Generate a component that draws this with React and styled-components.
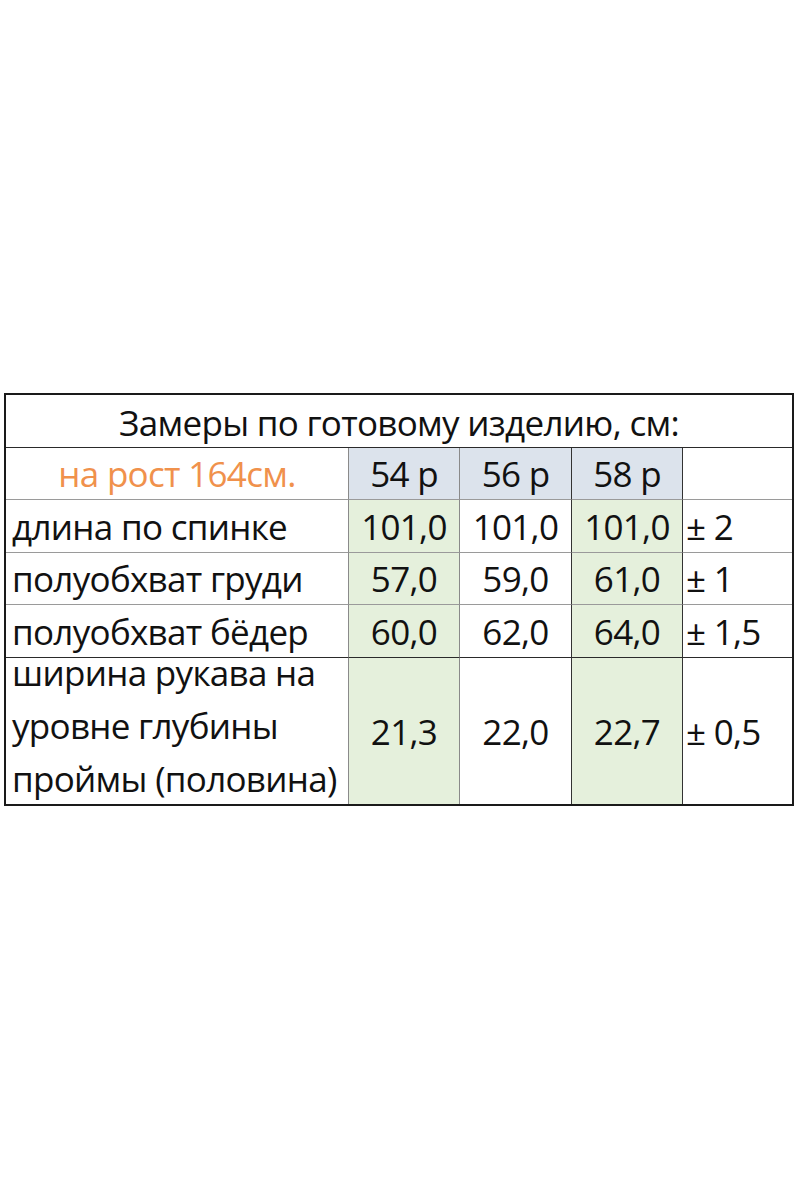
import React from "react";
import styled, { createGlobalStyle } from "styled-components";

const Global = createGlobalStyle`
  html, body { margin: 0; padding: 0; background: #fff; }
  body { font-family: "Open Sans", "Noto Sans", sans-serif; color: #111; }
`;

const Page = styled.div`
  width: 800px;
  height: 1200px;
  padding: 393px 0 0 4px;
  box-sizing: border-box;
`;

const Grid = styled.div`
  display: grid;
  width: 790px;
  box-sizing: border-box;
  grid-template-columns: 343px 111px 112px 111px 1fr;
  grid-template-rows: 53px 52px 53px 52px 53px 146px;
  border: 2px solid #1a1a1a;
  font-size: 35px;
  letter-spacing: -0.7px;
`;

const Cell = styled.div`
  display: flex;
  align-items: center;
  justify-content: ${(p) => (p.$align === "left" ? "flex-start" : "center")};
  padding: ${(p) => (p.$align === "left" ? `0 0 0 ${p.$pad || 6}px` : "0")};
  box-sizing: border-box;
  background: ${(p) =>
    p.$tone === "blue" ? "#dce3ec" : p.$tone === "green" ? "#e5f0dc" : "#fff"};
  border-right: ${(p) => (p.$last ? "none" : `1.5px solid ${p.$dark ? "#333" : "#8a8a8a"}`)};
  border-bottom: ${(p) => (p.$bottom ? "none" : `1.5px solid ${p.$darkBottom ? "#2a2a2a" : "#9a9a9a"}`)};
  grid-column: ${(p) => p.$span || "auto"};
  color: ${(p) => (p.$orange ? "#f0914c" : "#111")};
  white-space: nowrap;
`;

const Title = styled(Cell)`
  padding-top: 2px;
`;

const MultiLabel = styled(Cell)`
  flex-direction: column;
  align-items: flex-start;
  justify-content: center;
  gap: 23px;
  padding-bottom: 10px;
`;

const Line = styled.span`
  display: block;
  line-height: 30px;
`;

const sizes = ["54 р", "56 р", "58 р"];
const tones = ["green", "white", "green"];

const rows = [
  { label: "длина по спинке", vals: ["101,0", "101,0", "101,0"], tol: "± 2" },
  { label: "полуобхват груди", vals: ["57,0", "59,0", "61,0"], tol: "± 1" },
  { label: "полуобхват бёдер", vals: ["60,0", "62,0", "64,0"], tol: "± 1,5", dark: true },
];

export default function App() {
  return (
    <Page>
      <Global />
      <Grid>
        <Title $span="1 / -1" $last $darkBottom>
          Замеры по готовому изделию, см:
        </Title>
        <Cell $orange>на рост 164см.</Cell>
        {sizes.map((s, i) => (
          <Cell key={s} $tone="blue" $dark={i > 0}>
            {s}
          </Cell>
        ))}
        <Cell $last />
        {rows.map((r) => (
          <React.Fragment key={r.label}>
            <Cell $align="left" $darkBottom={r.dark}>{r.label}</Cell>
            {r.vals.map((v, i) => (
              <Cell key={i} $tone={tones[i]} $dark={i > 0} $darkBottom={r.dark}>
                {v}
              </Cell>
            ))}
            <Cell $align="left" $pad={3} $last $darkBottom={r.dark}>{r.tol}</Cell>
          </React.Fragment>
        ))}
        <MultiLabel $align="left" $bottom>
          <Line>ширина рукава на</Line>
          <Line>уровне глубины</Line>
          <Line>проймы (половина)</Line>
        </MultiLabel>
        {["21,3", "22,0", "22,7"].map((v, i) => (
          <Cell key={v} $tone={tones[i]} $dark={i > 0} $bottom>
            {v}
          </Cell>
        ))}
        <Cell $align="left" $pad={3} $last $bottom>± 0,5</Cell>
      </Grid>
    </Page>
  );
}
